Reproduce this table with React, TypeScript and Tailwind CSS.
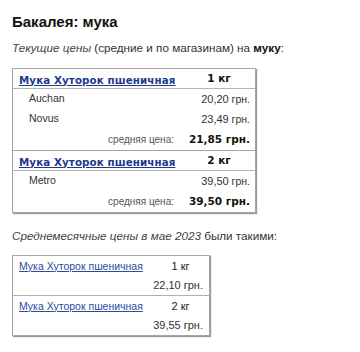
const shops1 = [
  { name: 'Auchan', price: '20,20' },
  { name: 'Novus', price: '23,49' }
]

const groups = [
  { weight: '1 кг', shops: shops1, avg: '21,85 грн.' },
  { weight: '2 кг', shops: [{ name: 'Metro', price: '39,50' }], avg: '39,50 грн.' }
]

const monthly = [
  { weight: '1 кг', price: '22,10 грн.' },
  { weight: '2 кг', price: '39,55 грн.' }
]

const bold = "font-['DejaVu_Sans',sans-serif] font-bold"

const CurrentTable = () => (
  <div className="w-[244px] border border-[#a6a6a6] shadow-[1px_1px_1px_#9a9a9a]">
    {groups.map((g, i) => (
      <div key={g.weight} className={i > 0 ? 'border-t border-[#a6a6a6]' : ''}>
        <div className="flex h-[20px] items-center border-b border-[#b5b5b5]">
          <div className="w-[170px] pl-[6px]">
            <a href="#" className={`whitespace-nowrap text-[10.3px] tracking-[0.1px] text-[#1f3a8c] underline ${bold}`}>
              Мука Хуторок пшеничная
            </a>
          </div>
          <span className={`flex-1 text-center text-[10.5px] text-[#111] ${bold}`}>{g.weight}</span>
        </div>
        {g.shops.map((s) => (
          <div key={s.name} className="flex h-[20px] items-center justify-between pr-[5px] pl-[16px] text-[10.5px] text-[#333]">
            <span>{s.name}</span>
            <span>
              <span className="text-[11px]">{s.price}</span> грн.
            </span>
          </div>
        ))}
        <div className="flex h-[21px] items-center">
          <span className="w-[170px] pr-[9px] text-right text-[10px] text-[#555]">средняя цена:</span>
          <span className={`flex-1 pr-[5px] text-right text-[10.5px] text-[#111] ${bold}`}>{g.avg}</span>
        </div>
      </div>
    ))}
  </div>
)

const MonthlyTable = () => (
  <div className="w-[198px] border border-[#a6a6a6] shadow-[1px_1px_1px_#9a9a9a]">
    {monthly.map((m, i) => (
      <div key={m.weight} className={i > 0 ? 'border-t border-[#b0b0b0]' : ''}>
        <div className="flex h-[20px] items-center text-[11px]">
          <div className="w-[145px] pl-[6px]">
            <a href="#" className="whitespace-nowrap text-[10.5px] text-[#2b4c9c] underline">
              Мука Хуторок пшеничная
            </a>
          </div>
          <span className="flex-1 pr-[6px] text-center text-[#222]">{m.weight}</span>
        </div>
        <div className="flex h-[19px] items-center justify-end pr-[6px] text-[11px] text-[#333]">{m.price}</div>
      </div>
    ))}
  </div>
)

export default function App() {
  return (
    <div className="min-h-screen bg-white px-[12px] pt-[12px] font-['Liberation_Sans',Arial,sans-serif] text-[#222]">
      <h1 className="text-[15px] leading-[20px] font-bold text-[#111]">Бакалея: мука</h1>
      <p className="mt-[8px] text-[11.7px] leading-[16px] text-[#333]">
        <i className="text-[#444]">Текущие цены</i> (средние и по магазинам) на <b className="text-[#111]">муку</b>:
      </p>
      <div className="mt-[12px]">
        <CurrentTable />
      </div>
      <p className="mt-[15px] text-[11.7px] leading-[16px] text-[#333]">
        <i className="text-[#444]">Среднемесячные цены в мае 2023</i> были такими:
      </p>
      <div className="mt-[11px]">
        <MonthlyTable />
      </div>
    </div>
  )
}
